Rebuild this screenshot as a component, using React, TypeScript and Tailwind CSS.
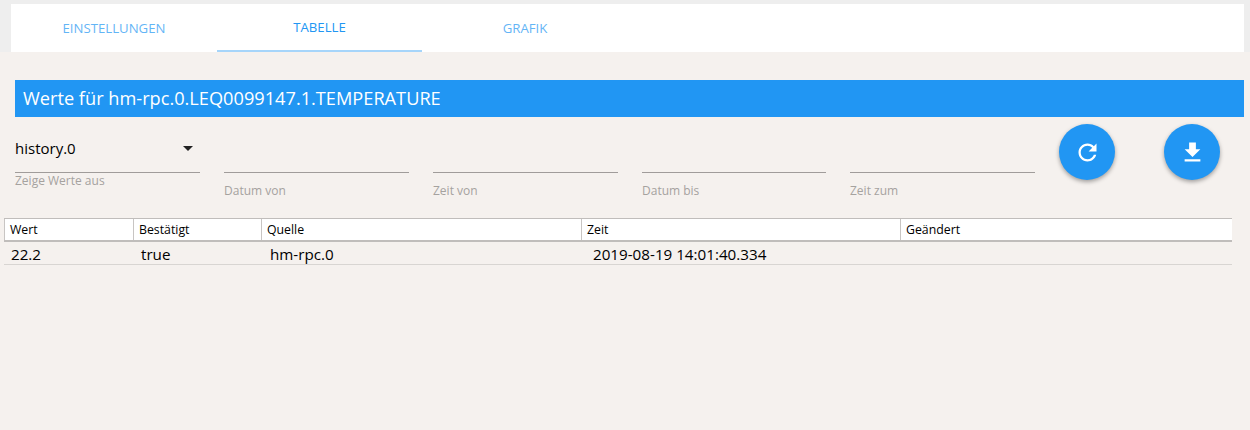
const fields = [
  { label: 'Datum von', width: 'w-[185px]' },
  { label: 'Zeit von', width: 'w-[185px]' },
  { label: 'Datum bis', width: 'w-[184px]' },
  { label: 'Zeit zum', width: 'w-[185px]' }
]

const columns = [
  { name: 'Wert', width: 'w-[130px]' },
  { name: 'Bestätigt', width: 'w-[128px]' },
  { name: 'Quelle', width: 'w-[320px]' },
  { name: 'Zeit', width: 'w-[319px]' },
  { name: 'Geändert', width: 'flex-1' }
]

export default function App() {
  return (
    <div className="w-[1250px] h-[430px] overflow-hidden bg-[#f5f1ee] font-['Open_Sans',sans-serif] text-black">
      {/* Tabs */}
      <div className="h-[52px] bg-[#eeeeee] pt-[4px] pl-[11px] pr-[6px]">
        <div className="flex h-[48px] bg-white text-[13.2px] text-[#2196f3]">
          <div className="w-[206px] pt-[2px] flex items-center justify-center opacity-70">EINSTELLUNGEN</div>
          <div className="w-[205px] pt-[2px] flex items-center justify-center border-b-2 border-[#a6d5fa]">TABELLE</div>
          <div className="w-[206px] pt-[2px] flex items-center justify-center opacity-70">GRAFIK</div>
        </div>
      </div>

      {/* Title */}
      <div className="mt-[28px] ml-[15px] mr-[6px] h-[37px] bg-[#2196f3] pl-[8px] flex items-center text-[18.2px] text-white">
        Werte für hm-rpc.0.LEQ0099147.1.TEMPERATURE
      </div>

      {/* Filter */}
      <div className="flex h-[101px] pl-[15px]">
        <div className="w-[185px] mr-[24px] pt-[20px]">
          <div className="h-[36px] flex items-center justify-between border-b border-[#a09c9a] pb-[12px] text-[15px]">
            <span>history.0</span>
            <span className="mr-[7px] w-0 h-0 border-x-[5px] border-x-transparent border-t-[5px] border-t-[#222222]" />
          </div>
          <div className="-mt-[1px] text-[12px] text-[#a5a29f]">Zeige Werte aus</div>
        </div>
        {fields.map((f) => (
          <div key={f.label} className={`${f.width} mr-[24px] pt-[20px]`}>
            <div className="h-[36px] border-b border-[#a09c9a]" />
            <div className="mt-[9px] text-[12px] text-[#a5a29f]">{f.label}</div>
          </div>
        ))}
        <div className="flex gap-[49px] pt-[7px]">
          <button className="w-[56px] h-[56px] rounded-full bg-[#2196f3] shadow-[0_2px_4px_rgba(0,0,0,0.35)] flex items-center justify-center text-white">
            <svg viewBox="0 0 24 24" className="w-[27px] h-[27px]" fill="currentColor">
              <path d="M17.65 6.35C16.2 4.9 14.21 4 12 4c-4.42 0-7.99 3.58-7.99 8s3.57 8 7.99 8c3.73 0 6.84-2.55 7.73-6h-2.08c-.82 2.33-3.04 4-5.65 4-3.31 0-6-2.69-6-6s2.69-6 6-6c1.66 0 3.14.69 4.22 1.78L13 11h7V4l-2.35 2.35z" />
            </svg>
          </button>
          <button className="w-[56px] h-[56px] rounded-full bg-[#2196f3] shadow-[0_2px_4px_rgba(0,0,0,0.35)] flex items-center justify-center text-white">
            <svg viewBox="0 0 24 24" className="w-[27px] h-[27px]" fill="currentColor">
              <path d="M19 9h-4V3H9v6H5l7 7 7-7zM5 18v2h14v-2H5z" />
            </svg>
          </button>
        </div>
      </div>

      {/* Table */}
      <div className="ml-[4px] w-[1228px] text-[12.3px]">
        <div className="flex h-[24px] bg-white border-y border-[#c0bdbb] border-b-2">
          {columns.map((c, i) => (
            <div
              key={c.name}
              className={`${c.width} pt-[1px] flex items-center pl-[5px] ${i < 4 ? 'border-r border-[#c8c5c3]' : ''} ${i === 0 ? 'border-l border-[#c8c5c3]' : ''}`}
            >
              {c.name}
            </div>
          ))}
        </div>
        <div className="flex h-[23px] pt-[2px] items-center border-b border-[#d8d5d2] text-[15.2px]">
          <div className="w-[130px] pl-[7px]">22.2</div>
          <div className="w-[128px] pl-[7px]">true</div>
          <div className="w-[320px] pl-[8px]">hm-rpc.0</div>
          <div className="w-[319px] pl-[11px]">2019-08-19 14:01:40.334</div>
        </div>
      </div>
    </div>
  )
}
